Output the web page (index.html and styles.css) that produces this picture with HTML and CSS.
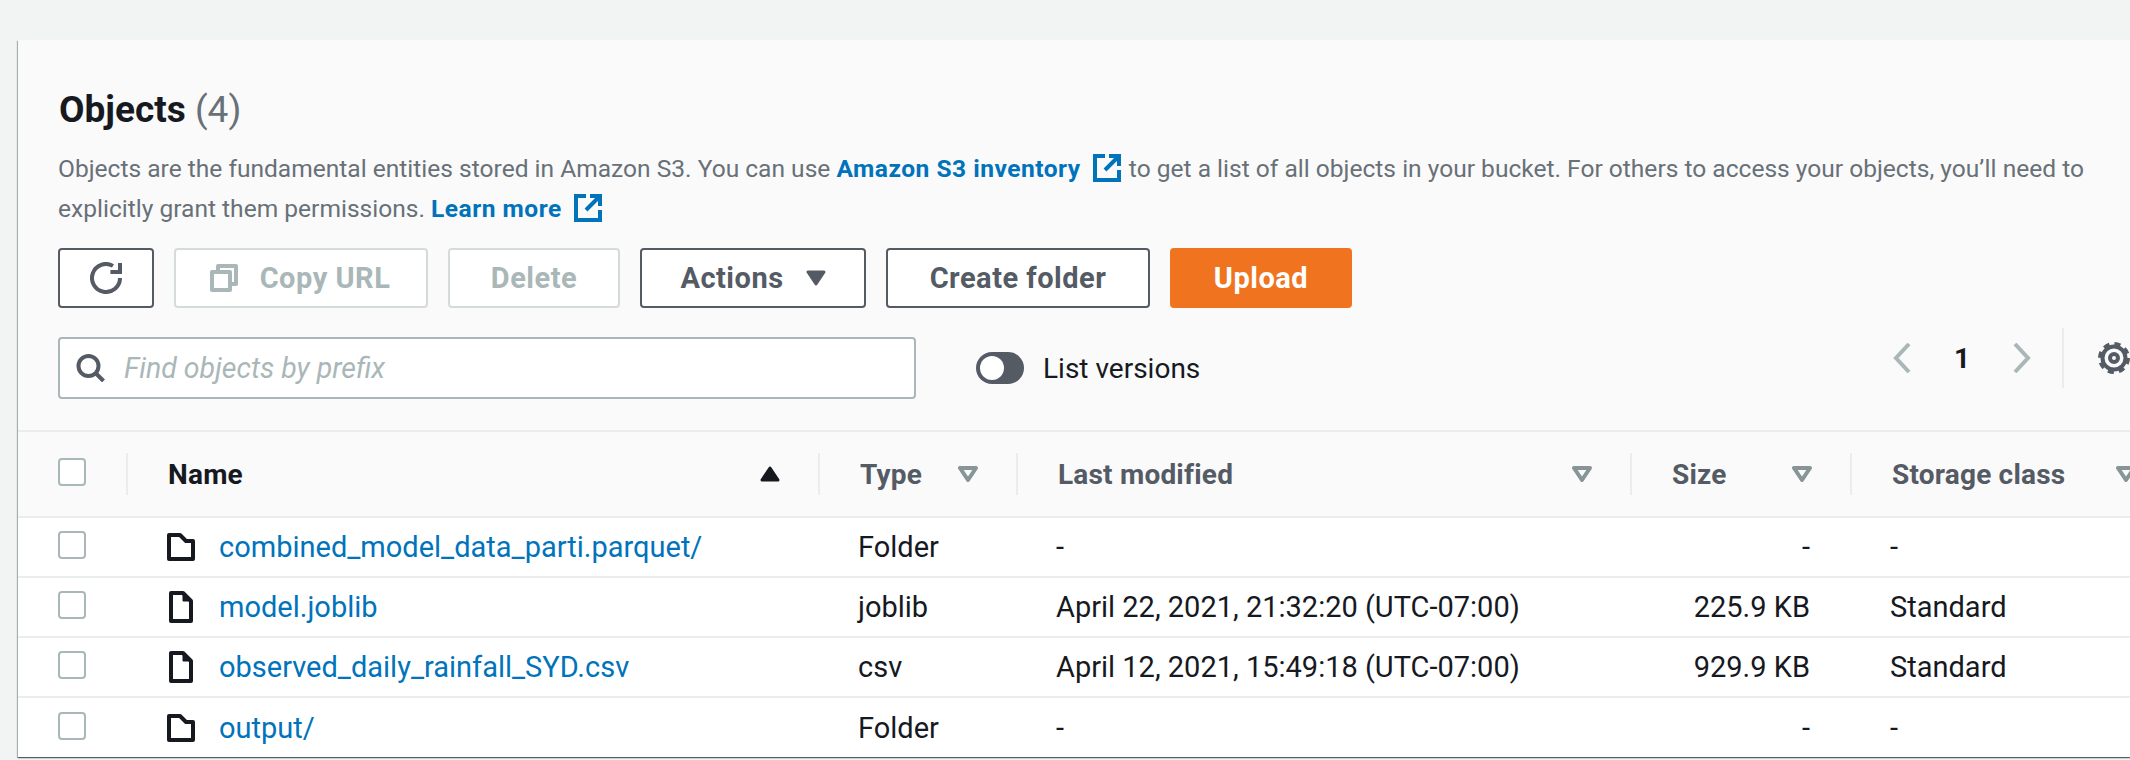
FILE: index.html
```html
<!DOCTYPE html>
<html>
<head>
    <meta charset="UTF-8" />
    <title>Objects</title>
    <link rel="stylesheet" href="styles.css">
</head>
<body>
    <div class="card">
        <div class="top">
            <h2 class="title">Objects <span class="count">(4)</span></h2>
            <p class="desc">Objects are the fundamental entities stored in Amazon S3. You can use <a href="#" class="ext">Amazon S3 inventory</a>
                <svg class="ext-icon" viewBox="0 0 28 28"><path d="M12 2H2V26H26V16M16 2H26V12M26 2L12 16"/></svg>
                to get a list of all objects in your bucket. For others to access your objects, you’ll need to explicitly grant them permissions. <a href="#" class="ext">Learn more</a>
                <svg class="ext-icon" viewBox="0 0 28 28"><path d="M12 2H2V26H26V16M16 2H26V12M26 2L12 16"/></svg>
            </p>

            <div class="actions">
                <button class="btn btn-refresh">
                    <svg class="icon32" viewBox="0 0 16 16"><path d="M15 8a7 7 0 1 1-3.5-6.06"/><path d="M15 .5V5H10.2"/></svg>
                </button>
                <button class="btn btn-copy off">
                    <svg class="icon28" viewBox="0 0 28 28"><path d="M2 8H20V26H2ZM8 8V2H26V20H20"/></svg>
                    Copy URL
                </button>
                <button class="btn btn-delete off">Delete</button>
                <button class="btn btn-actions">Actions
                    <svg class="tri" viewBox="0 0 20 16"><path class="solid" d="M2 2H18L10 14Z"/></svg>
                </button>
                <button class="btn btn-create">Create folder</button>
                <button class="btn btn-upload">Upload</button>
            </div>

            <div class="filter">
                <label class="search">
                    <svg class="search-icon" viewBox="0 0 28 28"><circle cx="12" cy="12" r="10"/><path d="M19 19L27 27"/></svg>
                    <input type="text" placeholder="Find objects by prefix" />
                </label>
                <div class="versions"><span class="toggle"><span class="knob"></span></span>List versions</div>
                <div class="pager">
                    <svg class="chev" viewBox="0 0 18 30"><path d="M16 1L3 15L16 29"/></svg>
                    <span class="page">1</span>
                    <svg class="chev" viewBox="0 0 18 30"><path d="M2 1L15 15L2 29"/></svg>
                    <span class="pager-line"></span>
                    <svg class="gear" viewBox="0 0 32 32">
                        <circle class="gear-ring" cx="16" cy="16" r="11.5"/>
                        <circle class="gear-teeth" cx="16" cy="16" r="14"/>
                        <circle class="gear-hub" cx="16" cy="16" r="4"/>
                    </svg>
                </div>
            </div>
        </div>

        <table class="objects">
            <colgroup>
                <col class="c-check"><col class="c-name"><col class="c-type"><col class="c-date"><col class="c-size"><col class="c-class">
            </colgroup>
            <thead>
                <tr>
                    <th class="check-cell"><span class="box"></span></th>
                    <th><div class="th"><span class="dark">Name</span><svg class="tri" viewBox="0 0 20 16"><path class="sort" d="M2 14H18L10 2Z"/></svg></div></th>
                    <th><div class="th">Type<svg class="tri" viewBox="0 0 20 16"><path class="flt" d="M2 2H18L10 14Z"/></svg></div></th>
                    <th><div class="th">Last modified<svg class="tri" viewBox="0 0 20 16"><path class="flt" d="M2 2H18L10 14Z"/></svg></div></th>
                    <th><div class="th">Size<svg class="tri" viewBox="0 0 20 16"><path class="flt" d="M2 2H18L10 14Z"/></svg></div></th>
                    <th><div class="th">Storage class<svg class="tri" viewBox="0 0 20 16"><path class="flt" d="M2 2H18L10 14Z"/></svg></div></th>
                </tr>
            </thead>
            <tbody>
                <tr>
                    <td class="check-cell"><span class="box"></span></td>
                    <td><div class="name"><span class="kind"><svg class="folder" viewBox="0 0 28 28"><path d="M2 2H13L19 8H26V26H2Z"/></svg></span><a href="#">combined_model_data_parti.parquet/</a></div></td>
                    <td>Folder</td><td>-</td><td class="num">-</td><td>-</td>
                </tr>
                <tr>
                    <td class="check-cell"><span class="box"></span></td>
                    <td><div class="name"><span class="kind"><svg class="file" viewBox="0 0 24 32"><path d="M2 2H14L22 10V30H2Z"/><path class="solid" d="M14 2L22 10H14Z"/></svg></span><a href="#">model.joblib</a></div></td>
                    <td>joblib</td><td>April 22, 2021, 21:32:20 (UTC-07:00)</td><td class="num">225.9 KB</td><td>Standard</td>
                </tr>
                <tr>
                    <td class="check-cell"><span class="box"></span></td>
                    <td><div class="name"><span class="kind"><svg class="file" viewBox="0 0 24 32"><path d="M2 2H14L22 10V30H2Z"/><path class="solid" d="M14 2L22 10H14Z"/></svg></span><a href="#">observed_daily_rainfall_SYD.csv</a></div></td>
                    <td>csv</td><td>April 12, 2021, 15:49:18 (UTC-07:00)</td><td class="num">929.9 KB</td><td>Standard</td>
                </tr>
                <tr>
                    <td class="check-cell"><span class="box"></span></td>
                    <td><div class="name"><span class="kind"><svg class="folder" viewBox="0 0 28 28"><path d="M2 2H13L19 8H26V26H2Z"/></svg></span><a href="#">output/</a></div></td>
                    <td>Folder</td><td>-</td><td class="num">-</td><td>-</td>
                </tr>
            </tbody>
        </table>
    </div>
</body>
</html>
```

FILE: styles.css
```css
*{
    box-sizing: border-box;
}
html, body{
    height: 100%;
    overflow: hidden;
}
body{
    margin: 0;
    padding: 40px 0 0 18px;
    background: #f2f3f3;
    color: #16191f;
    font-family: Roboto, "Liberation Sans", sans-serif;
    font-size: 28px;
}
svg{
    display: block;
    flex: none;
    fill: none;
}
a{
    color: #0073bb;
    text-decoration: none;
}

.card{
    width: 2112px;
    height: 717px;
    overflow: hidden;
    background: #fafafa;
    box-shadow: 0 1px 1px 0 rgba(0,28,36,.5), 1px 1px 1px 0 rgba(0,28,36,.15), -1px 1px 1px 0 rgba(0,28,36,.25);
}
.top{
    padding-left: 40px;
    padding-top: 50px;
}
.title{
    margin: 0 0 0 1px;
    font-size: 37px;
    line-height: 40px;
    font-weight: 700;
}
.count{
    font-weight: 400;
    color: #687078;
}
.desc{
    margin: 19px 0 0;
    width: 2040px;
    font-size: 24.55px;
    line-height: 40px;
    color: #687078;
}
.ext{
    font-weight: 700;
    letter-spacing: .5px;
    margin-right: 6px;
}
.ext-icon{
    display: inline-block;
    width: 28px;
    height: 28px;
    margin-right: 2px;
    vertical-align: -5px;
    stroke: #0073bb;
    stroke-width: 4;
}

.actions{
    display: flex;
    gap: 20px;
    margin-top: 19px;
}
.btn{
    display: flex;
    align-items: center;
    justify-content: center;
    height: 60px;
    border: 2px solid #545b64;
    border-radius: 4px;
    background: #fff;
    color: #545b64;
    font: inherit;
    font-size: 29px;
    font-weight: 700;
    letter-spacing: .5px;
}
.btn-refresh{ width: 96px; }
.btn-copy{ width: 254px; gap: 22px; padding-right: 8px; }
.btn-delete{ width: 172px; }
.btn-actions{ width: 226px; gap: 22px; }
.btn-create{ width: 264px; }
.btn-upload{
    width: 182px;
    background: #f0741f;
    border-color: #f0741f;
    color: #fff;
}
.btn.off{
    border-color: #d5dbdb;
    color: #aab7b8;
}
.icon32{
    width: 32px;
    height: 32px;
    stroke: #545b64;
    stroke-width: 2;
}
.icon28{
    width: 28px;
    height: 28px;
    stroke: #aab7b8;
    stroke-width: 4;
    stroke-linejoin: round;
}
.tri{
    width: 20px;
    height: 16px;
}
.tri .solid{
    fill: #545b64;
    stroke: #545b64;
    stroke-width: 3;
    stroke-linejoin: round;
}

.filter{
    display: flex;
    align-items: flex-start;
    height: 122px;
    padding-top: 20px;
}
.search{
    display: flex;
    align-items: center;
    gap: 17px;
    width: 858px;
    height: 62px;
    margin-top: 9px;
    padding-left: 16px;
    background: #fff;
    border: 2px solid #aab7b8;
    border-radius: 4px;
}
.search-icon{
    width: 29px;
    height: 28px;
    stroke: #545b64;
    stroke-width: 4;
}
.search input{
    flex: 1;
    border: 0;
    outline: 0;
    background: none;
    font: inherit;
    font-size: 28.5px;
    font-style: italic;
}
.search input::placeholder{
    color: #aab7b8;
}
.versions{
    display: flex;
    align-items: center;
    gap: 19px;
    height: 62px;
    margin: 9px 0 0 60px;
}
.toggle{
    display: block;
    width: 48px;
    height: 32px;
    padding: 4px;
    background: #545b64;
    border-radius: 16px;
}
.knob{
    display: block;
    width: 24px;
    height: 24px;
    border-radius: 50%;
    background: #fff;
}
.pager{
    display: flex;
    align-items: center;
    height: 60px;
    margin-left: auto;
}
.chev{
    width: 18px;
    height: 30px;
    stroke: #aab7b8;
    stroke-width: 4;
}
.page{
    width: 102px;
    text-align: center;
    font-weight: 700;
}
.pager-line{
    width: 2px;
    height: 60px;
    margin: 0 34px 0 31px;
    background: #eaeded;
}
.gear{
    width: 32px;
    height: 32px;
}
.gear-ring{
    stroke: #545b64;
    stroke-width: 4;
}
.gear-teeth{
    stroke: #545b64;
    stroke-width: 4;
    stroke-dasharray: 6 5;
}
.gear-hub{
    stroke: #545b64;
    stroke-width: 4;
}

.objects{
    width: 2156px;
    table-layout: fixed;
    border-collapse: separate;
    border-spacing: 0;
    background: #fff;
}
.c-check{ width: 108px; }
.c-name{ width: 692px; }
.c-type{ width: 198px; }
.c-date{ width: 614px; }
.c-size{ width: 220px; }
.c-class{ width: 324px; }

.objects th{
    height: 88px;
    padding: 0;
    background: #fafafa;
    border-top: 2px solid #eaeded;
    border-bottom: 2px solid #eaeded;
    color: #545b64;
    text-align: left;
    letter-spacing: .2px;
}
.th{
    display: flex;
    align-items: center;
    justify-content: space-between;
    height: 42px;
    padding: 0 38px 0 40px;
    border-left: 2px solid #eaeded;
}
.dark{
    color: #16191f;
}
.objects td{
    height: 60px;
    padding: 0 0 0 40px;
    border-bottom: 2px solid #eaeded;
    font-size: 29px;
    white-space: nowrap;
}
.objects tbody tr:last-child td{
    border-bottom: 0;
}
.objects .check-cell{
    padding: 0 0 0 40px;
}
.box{
    display: block;
    width: 28px;
    height: 28px;
    margin-bottom: 4px;
    background: #fff;
    border: 2px solid #aab7b8;
    border-radius: 4px;
}
.objects td.num{
    padding: 0 40px 0 0;
    text-align: right;
}
.name{
    display: flex;
    align-items: center;
    gap: 24px;
    margin-left: 1px;
}
.kind{
    display: flex;
    justify-content: center;
    width: 28px;
}
.folder{
    width: 28px;
    height: 28px;
}
.file{
    width: 24px;
    height: 32px;
}
.folder path, .file path{
    stroke: #16191f;
    stroke-width: 4;
    stroke-linejoin: round;
}
.file .solid{
    fill: #16191f;
    stroke-width: 1;
}
.sort{
    fill: #16191f;
    stroke: #16191f;
    stroke-width: 3;
    stroke-linejoin: round;
}
.flt{
    stroke: #879596;
    stroke-width: 4;
    stroke-linejoin: round;
}
```
